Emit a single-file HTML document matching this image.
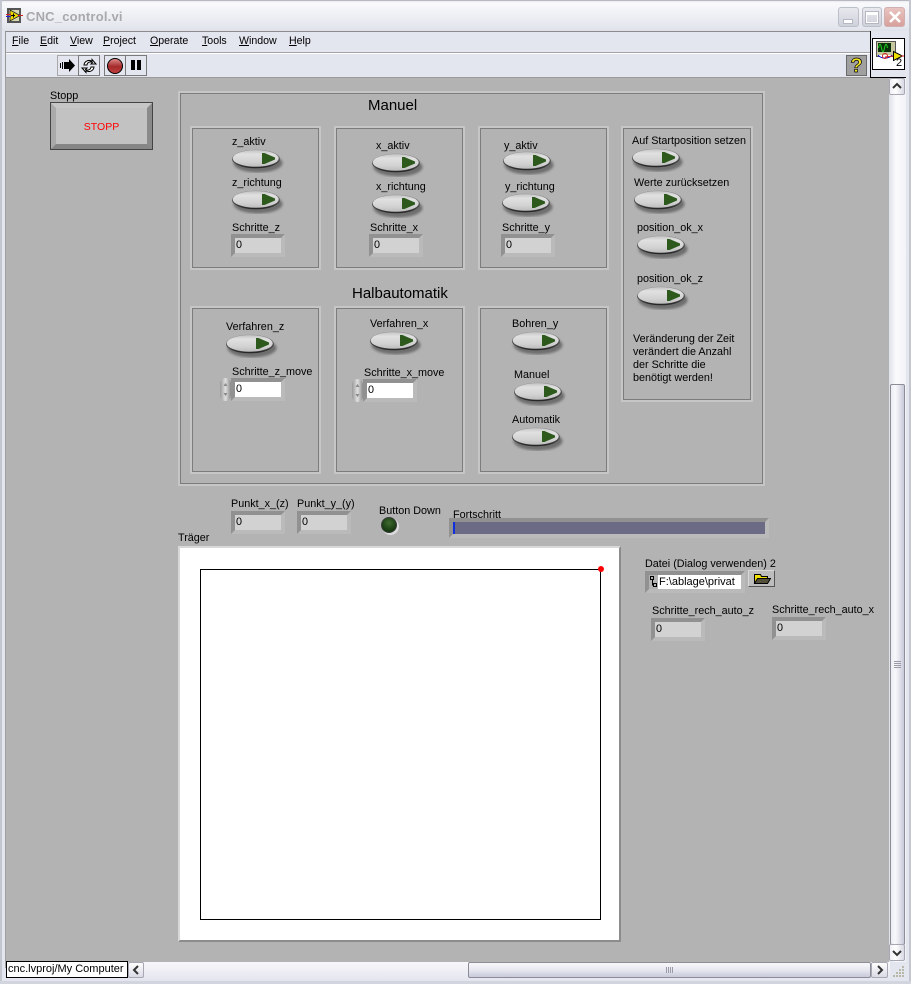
<!DOCTYPE html>
<html><head><meta charset="utf-8"><style>
html,body{margin:0;padding:0;background:#fff}
#w{position:relative;width:911px;height:984px;overflow:hidden;background:#e3e5ef;font:10.8px "Liberation Sans",sans-serif;color:#000}
#w div,#w svg{position:absolute;box-sizing:border-box}
.t{white-space:nowrap;line-height:13px;margin-top:1px}
.g2{border:2px solid #c6c6c6;box-shadow:inset 0 0 0 1px #7c7c7c}
.n{width:54px;height:23px;background:#d2d2d2;border-style:solid;border-width:4px;border-color:#919191 #bababa #bababa #919191;padding-left:1px;line-height:15px}
.m{color:#000;top:35px;line-height:13px;white-space:nowrap}
.menu{font-size:10.6px}
</style></head><body><div id="w">
<svg width="0" height="0" style="position:absolute"><defs>
<linearGradient id="sw" x1="0" y1="0" x2="0" y2="1"><stop offset="0" stop-color="#c4c4c4"/><stop offset=".25" stop-color="#e0e0e0"/><stop offset=".7" stop-color="#d2d2d2"/><stop offset="1" stop-color="#bdbdbd"/></linearGradient>
<linearGradient id="ol" x1="0" y1="0" x2="0" y2="1"><stop offset="0" stop-color="#8c8c8c"/><stop offset=".55" stop-color="#555"/><stop offset="1" stop-color="#222"/></linearGradient>
<filter id="bl" x="-20%" y="-40%" width="140%" height="180%"><feGaussianBlur stdDeviation="1.300"/></filter>
<symbol id="s" viewBox="0 0 54 24"><ellipse cx="27" cy="14" rx="24.500" ry="9.500" fill="#6e6e6e" filter="url(#bl)"/><ellipse cx="25" cy="10" rx="24" ry="9.300" fill="url(#ol)"/><ellipse cx="24.700" cy="9.400" rx="23" ry="8.300" fill="url(#sw)"/><path d="M31 4L33.500 4 44 8.500 44 10.500 33.500 15 31 15Z" fill="#2d5a1c"/></symbol>
</defs></svg>

<!-- title bar -->
<div style="left:0;top:0;width:911px;height:31px;background:linear-gradient(#dfe1ea 0,#fafafc 3px,#f1f2f6 12px,#e4e6ee 28px,#dfe1ea 31px)"></div>
<div style="left:0;top:0;width:911px;height:1px;background:#b8b8c0"></div>
<svg style="left:6px;top:7px" width="17" height="17" viewBox="0 0 17 17"><rect x="1" y="1" width="14" height="15" fill="#555"/><rect x="3" y="3" width="10" height="11" fill="#d8d8b0"/><path d="M4 3L14 8.500 4 14Z" fill="#e8d800" stroke="#222" stroke-width=".8"/><path d="M0 9.500h5" stroke="#1a1ae0"/><path d="M0 7.500h5" stroke="#d02020"/><path d="M12 8.500h5" stroke="#d02020"/><path d="M5 8.500h4M7.500 6.500v4" stroke="#000"/></svg>
<div class="t" style="left:26px;top:9px;font-size:13px;font-weight:bold;color:#a9a9ad;letter-spacing:.2px">CNC_control.vi</div>
<div style="left:838px;top:7px;width:21px;height:20px;border:1px solid #bcbec9;border-radius:3px;background:linear-gradient(#e8e9ee,#cfd1db)"></div>
<div style="left:844px;top:20px;width:8px;height:3px;background:#fff;box-shadow:0 0 0 1px #b5b7c3"></div>
<div style="left:862px;top:7px;width:20px;height:20px;border:1px solid #bcbec9;border-radius:3px;background:linear-gradient(#e8e9ee,#cfd1db)"></div>
<div style="left:866px;top:12px;width:12px;height:11px;border:1px solid #fff;border-top-width:3px;box-shadow:0 0 0 1px #b5b7c3"></div>
<div style="left:884px;top:7px;width:21px;height:20px;border:1px solid #d0b0b0;border-radius:3px;background:linear-gradient(#e8c4c0,#d8a09c)"></div>
<svg style="left:885px;top:7px" width="20" height="20"><path d="M5 5L15 15M15 5L5 15" stroke="#fff" stroke-width="2.600"/></svg>

<!-- menu frame -->
<div style="left:5px;top:31px;width:866px;height:47px;background:#e3e5ef;border-top:1px solid #8c8c8c;border-left:1px solid #999"></div>
<div style="left:6px;top:52px;width:866px;height:1px;background:#a4a4a8"></div>
<div style="left:6px;top:53px;width:866px;height:1px;background:#fff"></div>
<div style="left:6px;top:77px;width:884px;height:1px;background:#9a9a9a"></div>
<div class="menu">
<div class="m" style="left:12px"><u>F</u>ile</div>
<div class="m" style="left:40px"><u>E</u>dit</div>
<div class="m" style="left:70px"><u>V</u>iew</div>
<div class="m" style="left:103px"><u>P</u>roject</div>
<div class="m" style="left:150px"><u>O</u>perate</div>
<div class="m" style="left:202px"><u>T</u>ools</div>
<div class="m" style="left:239px"><u>W</u>indow</div>
<div class="m" style="left:289px"><u>H</u>elp</div>
</div>

<!-- toolbar buttons -->
<div style="left:57px;top:55px;width:22px;height:21px;border:1px solid #a8a8a8;background:#e3e5ef"></div>
<svg style="left:58px;top:56px" width="20" height="20"><path d="M7 6h4V3l6 6.500-6 6.500v-3H7z" fill="#000"/><path d="M2.500 7v5M4.500 6v7M6.500 6v7" stroke="#000"/></svg>
<div style="left:78px;top:55px;width:22px;height:21px;border:1px solid #7a7a7a;background:#e3e5ef"></div>
<svg style="left:79px;top:56px" width="20" height="20" fill="#fff" stroke="#000"><path d="M5 9a5 5 0 0 1 8-3.500V3.500l4 4.500h-5l1.500-1.500A3.500 3.500 0 0 0 8 9z"/><path d="M15 11a5 5 0 0 1-8 3.500v2l-4-4.500h5l-1.500 1.500A3.500 3.500 0 0 0 12 11z"/></svg>
<div style="left:104px;top:55px;width:22px;height:21px;border:1px solid #7a7a7a;background:#e3e5ef"></div>
<div style="left:107px;top:58px;width:16px;height:16px;border-radius:50%;background:linear-gradient(#d88,#a52a2a 55%,#c04040);border:1.500px solid #000"></div>
<div style="left:125px;top:55px;width:22px;height:21px;border:1px solid #7a7a7a;background:#e3e5ef"></div>
<div style="left:131px;top:60px;width:4px;height:10px;background:#000"></div>
<div style="left:137px;top:60px;width:4px;height:10px;background:#000"></div>
<div style="left:846px;top:55px;width:21px;height:21px;border:1px solid #6a6a6a;background:#a0a0a0"></div>
<div class="t" style="left:847px;top:55px;width:19px;text-align:center;font-size:20px;line-height:20px;font-weight:bold;color:#f5e820;-webkit-text-stroke:.7px #000">?</div>

<!-- connector icon -->
<div style="left:870px;top:31px;width:36px;height:47px;background:#e3e5ef;border-left:1px solid #000;border-bottom:1px solid #000"></div>
<div style="left:872px;top:38px;width:33px;height:32px;background:#fff;border:1px solid #000"></div>
<svg style="left:873px;top:39px" width="32" height="30"><rect x="3.500" y="2.500" width="19" height="15" fill="#c8c8a0" stroke="#555"/><rect x="5" y="4" width="13" height="9" fill="#0a300a"/><path d="M5.500 9c1-5 2-5 3 0s2 5 3 0 2-5 3 0" stroke="#22d022" fill="none"/><path d="M5 16a8 6 0 0 0 14 0" fill="#fff" stroke="#0000c0"/><circle cx="12" cy="17" r="2.500" fill="none" stroke="#d02020"/><path d="M20.500 12.500v9l9-4.500z" fill="#f0e000" stroke="#000"/><path d="M12 18l8-1M28 17h3" stroke="#e02020"/></svg>
<div class="t" style="left:896px;top:56px;font-size:11px">2</div>

<!-- panel -->
<div style="left:6px;top:78px;width:884px;height:884px;background:#b3b3b3"></div>
<div style="left:5px;top:78px;width:1px;height:890px;background:#a0a0a0"></div>
<div style="left:0;top:0;width:2px;height:984px;background:#c4c6d0"></div>
<div style="left:909px;top:0;width:2px;height:984px;background:#c4c6d0"></div>
<div style="left:0;top:981px;width:911px;height:3px;background:#d2d4de"></div>

<!-- vertical scrollbar -->
<div style="left:889px;top:78px;width:17px;height:884px;background:linear-gradient(90deg,#dfe1ea,#fafafc 40%,#f2f3f8)"></div>
<div style="left:889px;top:78px;width:16px;height:17px;border:1px solid #a8a8b4;border-radius:2px;background:linear-gradient(90deg,#f0f0f5,#fff 40%,#d8d9e4)"></div>
<svg style="left:889px;top:78px" width="16" height="17"><path d="M4 10l4-4 4 4" stroke="#333" stroke-width="2" fill="none"/></svg>
<div style="left:890px;top:384px;width:15px;height:561px;border:1px solid #8c8c96;border-radius:2px;background:linear-gradient(90deg,#eceef4,#f8f8fb 35%,#c9cada)"></div>
<div style="left:894px;top:661px;width:7px;height:1px;background:#9a9aa6"></div>
<div style="left:894px;top:663px;width:7px;height:1px;background:#9a9aa6"></div>
<div style="left:894px;top:665px;width:7px;height:1px;background:#9a9aa6"></div>
<div style="left:894px;top:667px;width:7px;height:1px;background:#9a9aa6"></div>
<div style="left:889px;top:944px;width:16px;height:17px;border:1px solid #a8a8b4;border-radius:2px;background:linear-gradient(90deg,#f0f0f5,#fff 40%,#d8d9e4)"></div>
<svg style="left:889px;top:944px" width="16" height="17"><path d="M4 7l4 4 4-4" stroke="#333" stroke-width="2" fill="none"/></svg>

<!-- bottom bar -->
<div style="left:6px;top:962px;width:884px;height:19px;background:linear-gradient(#f8f8fb,#e3e4ee)"></div>
<div style="left:6px;top:961px;width:122px;height:17px;background:#fff;border:1px solid #000"></div>
<div class="t" style="left:8px;top:962px;font-size:11px">cnc.lvproj/My Computer</div>
<div style="left:128px;top:962px;width:16px;height:16px;border:1px solid #a8a8b4;border-radius:2px;background:linear-gradient(#fff,#d9dae5)"></div>
<svg style="left:128px;top:962px" width="16" height="16"><path d="M10 4l-4 4 4 4" stroke="#333" stroke-width="2" fill="none"/></svg>
<div style="left:468px;top:962px;width:403px;height:16px;border:1px solid #8c8c96;border-radius:2px;background:linear-gradient(#f8f8fb,#e6e7f0 50%,#c9cada)"></div>
<div style="left:666px;top:967px;width:1px;height:6px;background:#9a9aa6"></div><div style="left:668px;top:967px;width:1px;height:6px;background:#9a9aa6"></div><div style="left:670px;top:967px;width:1px;height:6px;background:#9a9aa6"></div><div style="left:672px;top:967px;width:1px;height:6px;background:#9a9aa6"></div>
<div style="left:871px;top:962px;width:17px;height:16px;border:1px solid #a8a8b4;border-radius:2px;background:linear-gradient(#fff,#d9dae5)"></div>
<svg style="left:871px;top:962px" width="17" height="16"><path d="M7 4l4 4-4 4" stroke="#333" stroke-width="2" fill="none"/></svg>
<svg style="left:892px;top:964px" width="14" height="14" fill="#b8b8a8"><rect x="10" y="2" width="2" height="2"/><rect x="7" y="5" width="2" height="2"/><rect x="10" y="5" width="2" height="2"/><rect x="4" y="8" width="2" height="2"/><rect x="7" y="8" width="2" height="2"/><rect x="10" y="8" width="2" height="2"/><rect x="1" y="11" width="2" height="2"/><rect x="4" y="11" width="2" height="2"/><rect x="7" y="11" width="2" height="2"/><rect x="10" y="11" width="2" height="2"/></svg>

<!-- stop button -->
<div class="t" style="left:50px;top:89px">Stopp</div>
<div style="left:50px;top:102px;width:103px;height:48px;background:#8a8a8a;border:1px solid #444"></div>
<div style="left:51px;top:103px;width:101px;height:46px;border-style:solid;border-width:5px;border-color:#c6c6c6 #8a8a8a #868686 #aaaaaa;background:#c2c2c2"></div>
<div class="t" style="left:51px;top:120px;width:101px;text-align:center;color:#f00;font-size:10.500px">STOPP</div>

<!-- main frame -->
<div class="g2" style="left:178px;top:91px;width:587px;height:395px"></div>
<div class="t" style="left:368px;top:96px;font-size:15px;line-height:17px">Manuel</div>
<div class="t" style="left:352px;top:284px;font-size:15px;line-height:17px">Halbautomatik</div>

<div class="g2" style="left:190px;top:126px;width:131px;height:144px"></div>
<div class="g2" style="left:334px;top:126px;width:131px;height:144px"></div>
<div class="g2" style="left:478px;top:126px;width:131px;height:144px"></div>
<div class="g2" style="left:621px;top:126px;width:132px;height:276px"></div>
<div class="g2" style="left:190px;top:306px;width:131px;height:168px"></div>
<div class="g2" style="left:334px;top:306px;width:131px;height:168px"></div>
<div class="g2" style="left:478px;top:306px;width:131px;height:168px"></div>

<!-- labels -->
<div class="t" style="left:232px;top:135px">z_aktiv</div>
<div class="t" style="left:232px;top:176px">z_richtung</div>
<div class="t" style="left:232px;top:221px">Schritte_z</div>
<div class="t" style="left:376px;top:139px">x_aktiv</div>
<div class="t" style="left:376px;top:180px">x_richtung</div>
<div class="t" style="left:370px;top:221px">Schritte_x</div>
<div class="t" style="left:504px;top:139px">y_aktiv</div>
<div class="t" style="left:505px;top:180px">y_richtung</div>
<div class="t" style="left:502px;top:221px">Schritte_y</div>
<div class="t" style="left:632px;top:134px">Auf Startposition setzen</div>
<div class="t" style="left:634px;top:176px">Werte zurücksetzen</div>
<div class="t" style="left:637px;top:221px">position_ok_x</div>
<div class="t" style="left:637px;top:272px">position_ok_z</div>
<div class="t" style="left:633px;top:332px;line-height:13px">Veränderung der Zeit<br>verändert die Anzahl<br>der Schritte die<br>benötigt werden!</div>
<div class="t" style="left:226px;top:320px">Verfahren_z</div>
<div class="t" style="left:232px;top:365px">Schritte_z_move</div>
<div class="t" style="left:370px;top:317px">Verfahren_x</div>
<div class="t" style="left:364px;top:366px">Schritte_x_move</div>
<div class="t" style="left:512px;top:317px">Bohren_y</div>
<div class="t" style="left:514px;top:368px">Manuel</div>
<div class="t" style="left:512px;top:413px">Automatik</div>

<!-- switches -->
<svg style="left:231px;top:149px" width="54" height="24"><use href="#s"/></svg>
<svg style="left:231px;top:190px" width="54" height="24"><use href="#s"/></svg>
<svg style="left:371px;top:153px" width="54" height="24"><use href="#s"/></svg>
<svg style="left:371px;top:194px" width="54" height="24"><use href="#s"/></svg>
<svg style="left:502px;top:151px" width="54" height="24"><use href="#s"/></svg>
<svg style="left:501px;top:193px" width="54" height="24"><use href="#s"/></svg>
<svg style="left:631px;top:148px" width="54" height="24"><use href="#s"/></svg>
<svg style="left:633px;top:190px" width="54" height="24"><use href="#s"/></svg>
<svg style="left:636px;top:235px" width="54" height="24"><use href="#s"/></svg>
<svg style="left:636px;top:286px" width="54" height="24"><use href="#s"/></svg>
<svg style="left:225px;top:334px" width="54" height="24"><use href="#s"/></svg>
<svg style="left:369px;top:331px" width="54" height="24"><use href="#s"/></svg>
<svg style="left:511px;top:331px" width="54" height="24"><use href="#s"/></svg>
<svg style="left:513px;top:382px" width="54" height="24"><use href="#s"/></svg>
<svg style="left:511px;top:427px" width="54" height="24"><use href="#s"/></svg>

<!-- numerics -->
<div class="n" style="left:231px;top:234px">0</div>
<div class="n" style="left:369px;top:234px">0</div>
<div class="n" style="left:501px;top:234px">0</div>
<div class="n" style="left:231px;top:378px;background:#fff">0</div>
<div class="n" style="left:363px;top:379px;background:#fff">0</div>
<div style="left:220px;top:378px;width:11px;height:23px;border-radius:6px;background:linear-gradient(90deg,#999,#e0e0e0 50%,#8a8a8a)"></div>
<svg style="left:220px;top:378px" width="11" height="23" fill="#888"><path d="M5.500 5l-2 3h4zM5.500 18l-2-3h4z"/></svg>
<div style="left:352px;top:379px;width:11px;height:23px;border-radius:6px;background:linear-gradient(90deg,#999,#e0e0e0 50%,#8a8a8a)"></div>
<svg style="left:352px;top:379px" width="11" height="23" fill="#888"><path d="M5.500 5l-2 3h4zM5.500 18l-2-3h4z"/></svg>

<div class="t" style="left:231px;top:497px">Punkt_x_(z)</div>
<div class="t" style="left:297px;top:497px">Punkt_y_(y)</div>
<div class="n" style="left:231px;top:511px">0</div>
<div class="n" style="left:297px;top:511px">0</div>
<div class="t" style="left:379px;top:504px">Button Down</div>
<div style="left:382px;top:518px;width:17px;height:17px;border-radius:50%;background:#dcdcdc"></div>
<div style="left:381px;top:517px;width:16px;height:16px;border-radius:50%;background:radial-gradient(circle at 50% 35%,#3f6a30,#163a10 70%);border:1px solid #3a3a3a"></div>
<div style="left:449px;top:518px;width:320px;height:20px;background:#6b6b85;border-style:solid;border-width:4px;border-color:#919191 #bababa #bababa #919191"></div>
<div style="left:453px;top:522px;width:2px;height:12px;background:#1030e0"></div>
<div class="t" style="left:453px;top:508px">Fortschritt</div>

<!-- graph -->
<div class="t" style="left:178px;top:531px">Träger</div>
<div style="left:178px;top:546px;width:443px;height:396px;background:#fff;border:2px solid;border-color:#d8d8d8 #8c8c8c #8c8c8c #d8d8d8"></div>
<div style="left:200px;top:569px;width:401px;height:351px;border:1px solid #000;background:#fff"></div>
<div style="left:598px;top:566px;width:6px;height:6px;border-radius:50%;background:#f00"></div>

<!-- right controls -->
<div class="t" style="left:645px;top:557px">Datei (Dialog verwenden) 2</div>
<div style="left:645px;top:571px;width:100px;height:22px;background:#b3b3b3;border-style:solid;border-width:4px;border-color:#919191 #bababa #bababa #919191"></div>
<div style="left:658px;top:575px;width:83px;height:14px;background:#fff"></div>
<svg style="left:649px;top:575px" width="8" height="14" fill="none" stroke="#000"><path d="M1.500 1.500h3v3h-3zM4.500 8.500h3v3h-3zM3.500 4.500v5.500h1"/></svg>
<div class="t" style="left:659px;top:575px;font-size:11px">F:\ablage\privat</div>
<div style="left:748px;top:570px;width:27px;height:17px;background:#bdbdbd;border:1px solid;border-color:#d8d8d8 #555 #555 #d8d8d8"></div>
<svg style="left:753px;top:572px" width="18" height="13"><path d="M1.500 2.500h6l1 2h6v7h-13z" fill="#f0e000" stroke="#000"/><path d="M1.500 11.500l3-5h13l-3 5z" fill="#55503c" stroke="#000"/></svg>
<div class="t" style="left:652px;top:604px">Schritte_rech_auto_z</div>
<div class="t" style="left:772px;top:603px">Schritte_rech_auto_x</div>
<div class="n" style="left:651px;top:618px">0</div>
<div class="n" style="left:772px;top:617px">0</div>
</div></body></html>
